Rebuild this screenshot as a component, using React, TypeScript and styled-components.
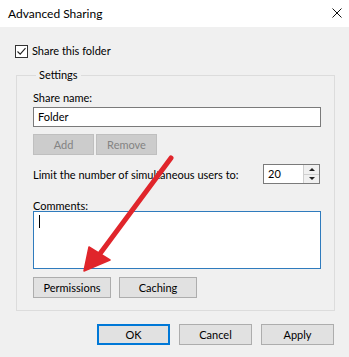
import React from "react";
import styled, { createGlobalStyle } from "styled-components";

const GlobalStyle = createGlobalStyle`
  html, body {
    margin: 0;
    padding: 0;
    background: #f0f0f0;
  }
  body {
    font-family: Lato, "Noto Sans", "Liberation Sans", sans-serif;
    font-size: 11px;
    color: #000;
  }
`;

const Dialog = styled.div`
  position: relative;
  width: 349px;
  height: 357px;
  background: #f0f0f0;
  overflow: hidden;
  white-space: nowrap;
`;

const TitleBar = styled.div`
  height: 27px;
  background: #fff;
  display: flex;
  align-items: center;
  justify-content: space-between;
  padding: 0 7px 0 8px;
  font-size: 12px;
`;

const CloseIcon = styled.svg`
  width: 10px;
  height: 10px;
  margin-top: -2px;
`;

const Body = styled.div`
  padding: 0 14px 0 16px;
`;

const CheckRow = styled.label`
  display: flex;
  align-items: center;
  gap: 4px;
  margin: 17px 0 0 -1px;
  height: 14px;
  line-height: 14px;
`;

const CheckBox = styled.span`
  width: 11px;
  height: 11px;
  border: 1px solid #333;
  background: #fff;
  display: flex;
  align-items: center;
  justify-content: center;
`;

const Group = styled.fieldset`
  margin: 10px 0 0 0;
  padding: 9px 13px 12px 16px;
  border: 1px solid #dcdcdc;
  min-width: 0;
`;

const Legend = styled.legend`
  padding: 0 3px;
  margin-left: 3px;
  height: 14px;
  line-height: 14px;
`;

const Label = styled.div<{ $top?: number; $h?: number }>`
  height: ${(p) => p.$h ?? 14}px;
  line-height: 14px;
  margin-top: ${(p) => p.$top ?? 0}px;
`;

const TextBox = styled.div`
  height: 18px;
  margin-top: 2px;
  border: 1px solid #7a7a7a;
  background: #fff;
  padding: 0 4px;
  line-height: 18px;
`;

const Row = styled.div<{ $gap: number; $top: number }>`
  display: flex;
  gap: ${(p) => p.$gap}px;
  margin-top: ${(p) => p.$top}px;
  align-items: center;
`;

const Button = styled.button<{ $w: number; $primary?: boolean }>`
  width: ${(p) => p.$w}px;
  height: 21px;
  padding: 0;
  font: inherit;
  color: #000;
  background: #e1e1e1;
  border: ${(p) => (p.$primary ? "2px solid #0078d7" : "1px solid #adadad")};
  &:disabled {
    background: #cccccc;
    border-color: #bfbfbf;
    color: #838383;
  }
`;

const LimitRow = styled.div`
  display: flex;
  align-items: center;
  justify-content: space-between;
  height: 20px;
  margin-top: 9px;
`;

const Spin = styled.div`
  display: flex;
  width: 55px;
  height: 18px;
  border: 1px solid #7a7a7a;
  background: #fff;
  margin-right: 1px;
`;

const SpinValue = styled.div`
  flex: 1;
  padding-left: 4px;
  line-height: 18px;
`;

const SpinButtons = styled.div`
  width: 15px;
  display: flex;
  flex-direction: column;
  border-left: 1px solid #cfcfcf;
`;

const SpinArrow = styled.div<{ $down?: boolean }>`
  flex: 1;
  display: flex;
  align-items: center;
  justify-content: center;
  background: #f0f0f0;
  border-top: ${(p) => (p.$down ? "1px solid #cfcfcf" : "none")};
  &::after {
    content: "";
    border-left: 3px solid transparent;
    border-right: 3px solid transparent;
    ${(p) =>
      p.$down ? "border-top: 3px solid #222;" : "border-bottom: 3px solid #222;"}
  }
`;

const TextArea = styled.div`
  height: 50px;
  border: 1px solid #2f7bbd;
  background: #fff;
  padding: 3px 5px;
`;

const Caret = styled.div`
  width: 1px;
  height: 13px;
  background: #000;
`;

const Footer = styled.div`
  display: flex;
  justify-content: flex-end;
  gap: 9px;
  margin-top: 13px;
  padding-right: 1px;
`;

const Arrow = styled.svg`
  position: absolute;
  left: 0;
  top: 0;
  width: 349px;
  height: 357px;
  pointer-events: none;
`;

export default function App() {
  return (
    <>
      <GlobalStyle />
      <Dialog>
        <TitleBar>
          <span>Advanced Sharing</span>
          <CloseIcon viewBox="0 0 10 10">
            <path d="M0.5 0.5 L9.5 9.5 M9.5 0.5 L0.5 9.5" stroke="#111" strokeWidth="1" />
          </CloseIcon>
        </TitleBar>
        <Body>
          <CheckRow>
            <CheckBox>
              <svg width="9" height="9" viewBox="0 0 9 9">
                <path d="M0.5 4.5 L3.2 7.2 L8.5 1.2" fill="none" stroke="#222" strokeWidth="1.1" />
              </svg>
            </CheckBox>
            Share this folder
          </CheckRow>
          <Group>
            <Legend>Settings</Legend>
            <Label>Share name:</Label>
            <TextBox>Folder</TextBox>
            <Row $gap={2} $top={7}>
              <Button $w={61} disabled>Add</Button>
              <Button $w={61} disabled>Remove</Button>
            </Row>
            <LimitRow>
              <span>Limit the number of simultaneous users to:</span>
              <Spin>
                <SpinValue>20</SpinValue>
                <SpinButtons>
                  <SpinArrow />
                  <SpinArrow $down />
                </SpinButtons>
              </Spin>
            </LimitRow>
            <Label $top={15} $h={12}>Comments:</Label>
            <TextArea>
              <Caret />
            </TextArea>
            <Row $gap={8} $top={8}>
              <Button $w={78}>Permissions</Button>
              <Button $w={78}>Caching</Button>
            </Row>
          </Group>
          <Footer>
            <Button $w={73} $primary>OK</Button>
            <Button $w={73}>Cancel</Button>
            <Button $w={73}>Apply</Button>
          </Footer>
        </Body>
        <Arrow viewBox="0 0 349 357">
          <line x1="171" y1="158" x2="99" y2="255" stroke="#e0252b" strokeWidth="5" strokeLinecap="round" />
          <path d="M84 271 L89 247 L110 260 Z" fill="#e0252b" stroke="#e0252b" strokeWidth="1.5" strokeLinejoin="round" />
        </Arrow>
      </Dialog>
    </>
  );
}
